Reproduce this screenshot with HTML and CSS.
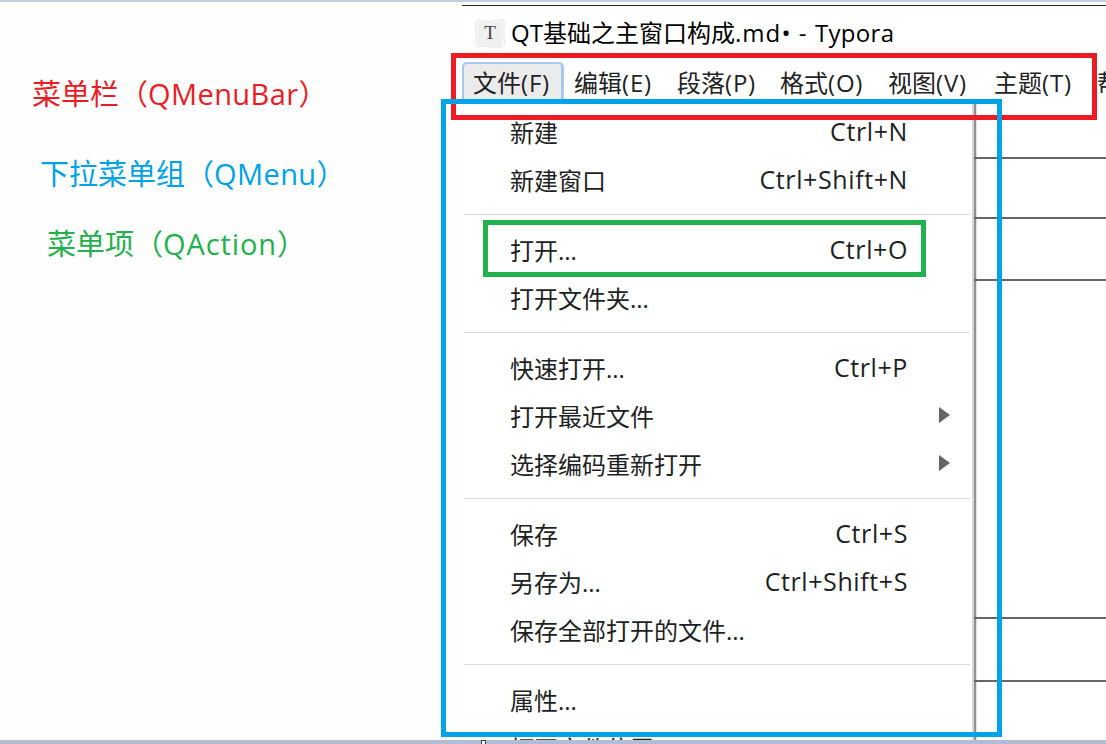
FILE: index.html
```html
<!DOCTYPE html>
<html lang="zh-CN">
<head>
<meta charset="utf-8">
<title>QT基础之主窗口构成</title>
<link rel="stylesheet" href="styles.css">
</head>
<body>
<div class="stage">
  <aside class="legend">
    <p class="note note-bar">菜单栏（<span>QMenuBar</span>）</p>
    <p class="note note-menu">下拉菜单组（<span>QMenu</span>）</p>
    <p class="note note-action">菜单项（<span>QAction</span>）</p>
  </aside>
  <main class="window">
    <header class="titlebar">
      <svg class="logo" width="32" height="32" viewBox="0 0 32 32">
        <path d="M4 1 Q9 4 16 3 Q24 1 29 2 L31 6 Q29 13 30 19 L31 26 L27 29 Q23 31 17 29 Q10 28 5 29 L1 26 Q3 18 2 13 L1 6 Z" fill="#f8f8f8" stroke="#e9e9e9"/>
        <rect x="4" y="4" width="24" height="24" rx="2" fill="#f0f0f0"/>
        <text x="16" y="21" text-anchor="middle" class="logo-letter">T</text>
      </svg>
      <h1 class="title">QT基础之主窗口构成<span class="t-end">.md• - </span><span class="t-app">Typora</span></h1>
    </header>
    <nav class="menubar">
      <span class="tab tab-open">文件<span>(F)</span></span>
      <span class="tab">编辑<span>(E)</span></span>
      <span class="tab">段落<span>(P)</span></span>
      <span class="tab">格式<span>(O)</span></span>
      <span class="tab">视图<span>(V)</span></span>
      <span class="tab">主题<span>(T)</span></span>
      <span class="tab">帮</span>
    </nav>
    <div class="body">
      <div class="dropdown">
        <div class="item">新建<kbd>Ctrl+N</kbd></div>
        <div class="item">新建窗口<kbd>Ctrl+Shift+N</kbd></div>
        <hr>
        <div class="item">打开...<kbd>Ctrl+O</kbd></div>
        <div class="item">打开文件夹...</div>
        <hr>
        <div class="item">快速打开...<kbd>Ctrl+P</kbd></div>
        <div class="item">打开最近文件<i class="arrow"></i></div>
        <div class="item">选择编码重新打开<i class="arrow"></i></div>
        <hr>
        <div class="item">保存<kbd>Ctrl+S</kbd></div>
        <div class="item">另存为...<kbd>Ctrl+Shift+S</kbd></div>
        <div class="item">保存全部打开的文件...</div>
        <hr>
        <div class="item">属性...</div>
        <div class="item">打开文件位置</div>
      </div>
      <div class="document">
        <div class="row row-a"></div>
        <div class="row row-b"></div>
        <div class="row row-c"></div>
        <div class="row row-d"></div>
        <div class="row row-e"></div>
      </div>
    </div>
  </main>
  <footer class="edge"><div class="handle"></div></footer>
  <div class="frame frame-bar"></div>
  <div class="frame frame-menu"></div>
  <div class="frame frame-action"></div>
</div>
</body>
</html>
```

FILE: styles.css
```css
* { box-sizing: border-box; }

body {
  margin: 0;
  overflow: hidden;
  background: #fff;
  font-family: "Open Sans", "Noto Sans CJK SC", sans-serif;
  font-weight: 390;
}

.stage {
  position: relative;
  display: grid;
  grid-template-columns: 462px 1fr;
  grid-template-rows: 738px 4px;
  width: 1106px;
  height: 744px;
  overflow: hidden;
  border-top: 2px solid #c5cfe0;
  background: #fefefe;
}

.legend {
  padding: 67px 0 0 32px;
}

.note {
  margin: 0;
  font-size: 29px;
  line-height: 50px;
  white-space: nowrap;
}

.note span { letter-spacing: 0.4px; }

.note-bar { color: #ed1c24; }
.note-menu { margin: 30px 0 20px 8px; color: #00a2e8; }
.note-action { margin-left: 15px; color: #22b14c; }
.note-action span { letter-spacing: 0.9px; }

.window {
  display: flex;
  flex-direction: column;
  height: 735px;
  margin-top: 3px;
  overflow: hidden;
  border-top: 1px solid #2a2426;
  background: #fff;
}

.titlebar {
  display: flex;
  flex: none;
  align-items: center;
  gap: 5px;
  height: 56px;
  padding-left: 12px;
}

.logo { flex: none; }

.logo-letter {
  font: 19px "Liberation Serif", serif;
  fill: #444;
}

.title {
  margin: 0;
  padding-bottom: 2px;
  font-size: 24px;
  font-weight: 400;
  line-height: 40px;
  white-space: nowrap;
  color: #000;
}

.t-end { letter-spacing: 1.1px; }
.t-app { letter-spacing: 0.3px; }

.menubar {
  display: grid;
  flex: none;
  grid-template-columns: 103px 103px 103px 108px 106px 103px 100px;
  height: 42px;
  font-size: 24px;
  line-height: 42px;
  white-space: nowrap;
  color: #222;
}

.tab { padding-left: 9px; }
.tab span { letter-spacing: 0.8px; }

.tab-open {
  width: 102px;
  border: 2px solid #a9c8f0;
  border-right-width: 3px;
  border-radius: 5px;
  line-height: 38px;
  background: #ebebeb;
}

.body {
  display: flex;
  flex: none;
  height: 636px;
}

.dropdown {
  flex: none;
  width: 512px;
  padding-top: 4px;
  border-right: 2px solid #d5d6da;
  background: #fff;
  font-size: 24px;
  color: #1d1f24;
}

.item {
  display: flex;
  align-items: center;
  justify-content: space-between;
  height: 48px;
  padding: 0 64px 2px 48px;
  white-space: nowrap;
}

kbd {
  font: inherit;
  font-size: 25px;
  letter-spacing: 0.6px;
}

hr {
  height: 1px;
  margin: 10px 2px 11px;
  border: 0;
  background: #d9dadd;
}

.arrow {
  margin: -1px -42px 0 0;
  border: solid transparent;
  border-width: 8px 0 8px 11px;
  border-left-color: #636466;
}

.document {
  flex: 1;
  box-shadow: inset 2px 0 #919191, inset 3px 0 #e2e2e2;
}

.row {
  border-bottom: 2px solid #666;
}

.row-a { height: 55px; }
.row-b { height: 60px; }
.row-c { height: 62px; }
.row-d { height: 338px; }
.row-e { height: 63px; }

.edge {
  grid-column: 1 / -1;
  padding-left: 481px;
  background: #b3bdd1;
}

.handle {
  width: 5px;
  height: 5px;
  border: 1px solid #444;
  background: #fff;
}

.frame {
  position: absolute;
  border: 5px solid;
}

.frame-bar { left: 451px; top: 51px; width: 646px; height: 67px; border-color: #ed1c24; }
.frame-menu { left: 441px; top: 97px; width: 561px; height: 638px; border-color: #00a2e8; }
.frame-action { left: 483px; top: 218px; width: 443px; height: 57px; border-color: #22b14c; }
```
